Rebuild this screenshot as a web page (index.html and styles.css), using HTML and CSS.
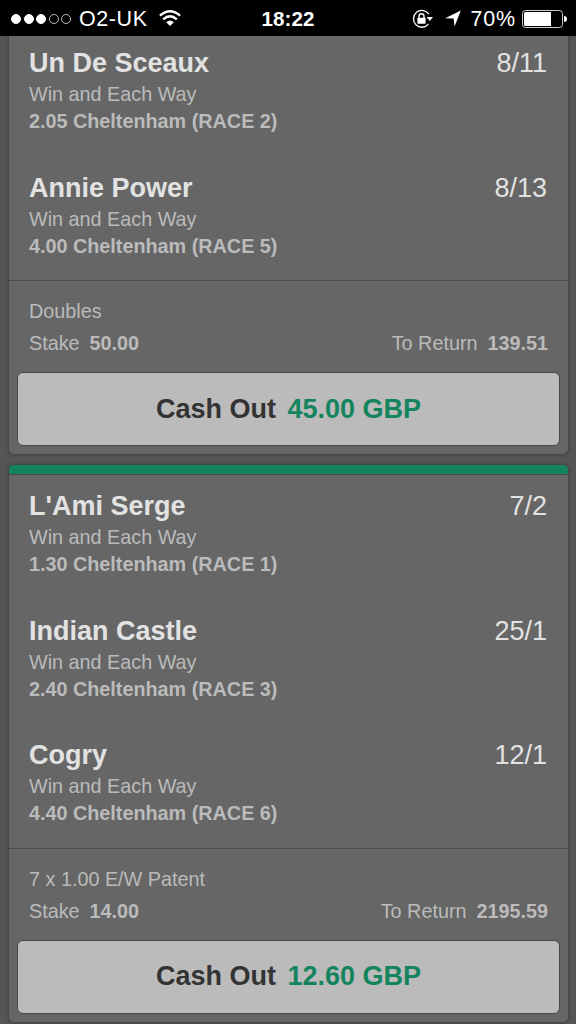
FILE: index.html
```html
<!DOCTYPE html>
<html lang="en">
<head>
  <meta charset="UTF-8" />
  <meta name="viewport" content="width=device-width, initial-scale=1.0" />
  <title>My Bets</title>
  <link rel="stylesheet" href="styles.css">
</head>
<body>
  <header class="status">
    <div class="carrier">
      <div class="signal"><i class="on"></i><i class="on"></i><i class="on"></i><i></i><i></i></div>
      <span class="network">O2-UK</span>
      <svg class="wifi" width="22" height="17" viewBox="0 0 22 17" fill="none" stroke="#fff" stroke-width="2.4">
        <path d="M0.9 5.7Q11 -3.2 21.1 5.7" />
        <path d="M4.2 9.3Q11 3.4 17.8 9.3" />
        <path d="M7.2 12.2Q11 8.9 14.8 12.2L11 16Z" fill="#fff" stroke="none" />
      </svg>
    </div>
    <span class="time">18:22</span>
    <div class="indicators">
      <svg class="lock" width="22" height="20" viewBox="0 0 22 20">
        <path d="M16.9 5.2A8.4 8.4 0 1 0 16.4 15.2" fill="none" stroke="#fff" stroke-width="1.3" />
        <path d="M14.6 8.1H21L17.8 12Z" fill="#fff" />
        <rect x="5.4" y="8.7" width="8.2" height="6" rx="0.6" fill="#fff" />
        <path d="M7 9V7.2a2.5 2.5 0 0 1 5 0V9" fill="none" stroke="#fff" stroke-width="1.4" />
      </svg>
      <svg class="arrow" width="16" height="17" viewBox="0 0 16 17">
        <path d="M15.8 0.4L9.6 16.6L8.6 8.6L0.2 8.2Z" fill="#fff" />
      </svg>
      <span class="percent">70%</span>
      <div class="battery"><div class="cell"><div class="charge"></div></div><div class="tip"></div></div>
    </div>
  </header>

  <main class="bets">
    <section class="bet scrolled">
      <div class="selection">
        <div class="name"><span>Un De Sceaux</span><span class="odds">8/11</span></div>
        <div class="market">Win and Each Way</div>
        <div class="race">2.05 Cheltenham (RACE 2)</div>
      </div>
      <div class="selection">
        <div class="name"><span>Annie Power</span><span class="odds">8/13</span></div>
        <div class="market">Win and Each Way</div>
        <div class="race">4.00 Cheltenham (RACE 5)</div>
      </div>
      <div class="summary">
        <div class="line">Doubles</div>
        <div class="line"><span>Stake <b>50.00</b></span><span>To Return <b>139.51</b></span></div>
        <button class="cashout">Cash Out <span class="amount">45.00 GBP</span></button>
      </div>
    </section>

    <section class="bet open">
      <div class="selection">
        <div class="name"><span>L'Ami Serge</span><span class="odds">7/2</span></div>
        <div class="market">Win and Each Way</div>
        <div class="race">1.30 Cheltenham (RACE 1)</div>
      </div>
      <div class="selection">
        <div class="name"><span>Indian Castle</span><span class="odds">25/1</span></div>
        <div class="market">Win and Each Way</div>
        <div class="race">2.40 Cheltenham (RACE 3)</div>
      </div>
      <div class="selection">
        <div class="name"><span>Cogry</span><span class="odds">12/1</span></div>
        <div class="market">Win and Each Way</div>
        <div class="race">4.40 Cheltenham (RACE 6)</div>
      </div>
      <div class="summary">
        <div class="line">7 x 1.00 E/W Patent</div>
        <div class="line"><span>Stake <b>14.00</b></span><span>To Return <b>2195.59</b></span></div>
        <button class="cashout">Cash Out <span class="amount">12.60 GBP</span></button>
      </div>
    </section>
  </main>
</body>
</html>
```
FILE: styles.css
```css
* { margin: 0; padding: 0; box-sizing: border-box; }
body {
  font-family: "Liberation Sans", Arial, sans-serif;
  background: #555;
  color: #bbb;
  height: 1024px;
  overflow: hidden;
}

/* status bar */
.status {
  display: grid;
  grid-template-columns: 1fr auto 1fr;
  align-items: center;
  height: 36px;
  padding: 0 9px 0 11px;
  background: #000;
  color: #fff;
}
.carrier, .indicators, .signal, .battery { display: flex; align-items: center; }
.signal { gap: 2.6px; }
.signal i {
  width: 10px;
  height: 10px;
  border: 1px solid #bbb;
  border-radius: 50%;
}
.signal .on { background: #fff; border-color: #fff; }
.network { margin-left: 7.5px; font-size: 21.5px; letter-spacing: 0.6px; line-height: 36px; padding-top: 1px; }
.wifi { margin-left: 11px; }
.time { margin-left: -2px; font-size: 20.6px; font-weight: bold; letter-spacing: 0.1px; line-height: 36px; padding-top: 1px; }
.indicators { justify-content: flex-end; }
.arrow { margin-left: 11px; }
.percent { margin-left: 10px; font-size: 21.5px; letter-spacing: 0.8px; line-height: 36px; padding-top: 1px; }
.battery { margin-left: 6px; }
.cell {
  width: 41px;
  height: 18px;
  padding: 1px;
  border: 1px solid #ccc;
  border-radius: 3.5px;
}
.charge { width: 27px; height: 14px; background: #fff; border-radius: 1.5px 0 0 1.5px; }
.tip { width: 3px; height: 6px; background: #fff; border-radius: 0 3px 3px 0; margin-left: 1px; }

/* bet cards */
.bets { padding: 0 7px 0 8px; }
.bet {
  background: #666;
  border: 1px solid #484848;
  border-radius: 6px;
  box-shadow: 0 0 3px rgba(0,0,0,0.25);
  overflow: hidden;
}
.bet + .bet { margin-top: 9px; }
.scrolled { border-top: 0; border-radius: 0 0 6px 6px; }
.scrolled .selection:first-child { padding-top: 11px; }
.open::before {
  content: "";
  display: block;
  height: 9px;
  background: #14845f;
  border-bottom: 1px solid #484848;
}
.open .selection:first-child { padding-top: 15px; }
.selection { padding: 16px 20px 22.5px; }
.name {
  display: flex;
  justify-content: space-between;
  font-size: 27px;
  font-weight: bold;
  line-height: 32px;
  color: #e2e2e2;
}
.odds { font-weight: normal; margin-right: 1px; }
.market { font-size: 19.8px; line-height: 30px; }
.race { font-size: 19.8px; font-weight: bold; line-height: 24px; }

.summary { border-top: 1px solid #4d4d4d; padding: 14px 8px 8px; }
.line {
  display: flex;
  justify-content: space-between;
  padding: 0 12px;
  font-size: 19.8px;
  line-height: 32px;
}
.line b { margin-left: 4.5px; }
.cashout {
  display: block;
  width: 100%;
  height: 74px;
  margin-top: 13px;
  background: #bbb;
  border: 1px solid #484848;
  border-radius: 6px;
  font: bold 27px "Liberation Sans", Arial, sans-serif;
  color: #333;
}
.amount { margin-left: 4px; color: #14845f; }
```
